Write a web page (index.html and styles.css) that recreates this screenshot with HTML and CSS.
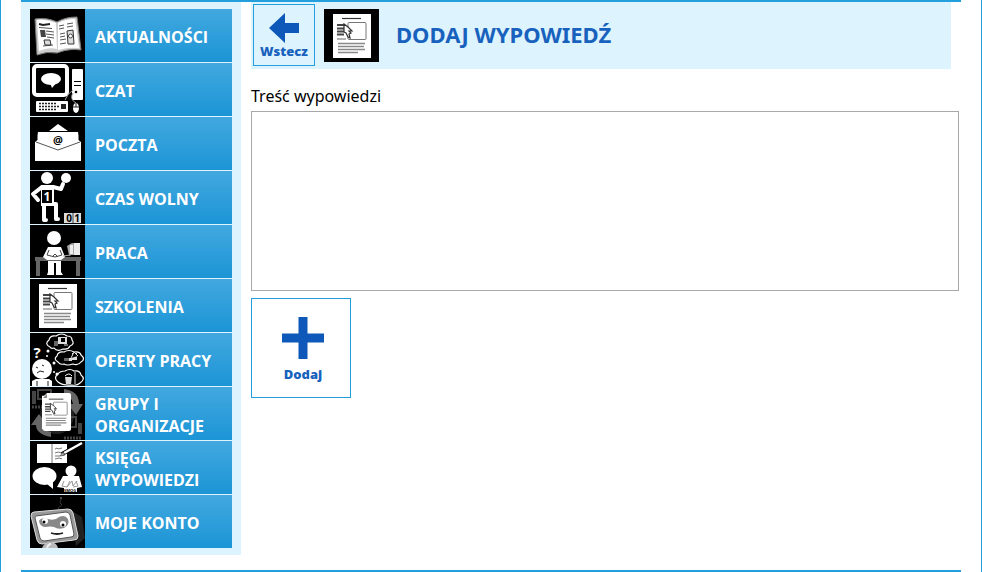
FILE: index.html
```
<!DOCTYPE html>
<html lang="pl">
<head>
<meta charset="utf-8">
<title>Dodaj wypowiedź</title>
<link rel="stylesheet" href="styles.css">
</head>
<body>
<svg class="defs" aria-hidden="true">
  <defs>
    <symbol id="sheet" viewBox="0 0 38 44">
      <path fill="#fff" d="M0 0h38v44H0z"/>
      <path stroke="#333" stroke-width="1.200" d="M9 4.500h19"/>
      <path stroke="#444" stroke-width="1.800" d="M4 11h8M4 14.500h7M4 17.500h8M4 20.500h7"/>
      <path stroke="#999" stroke-width="1.500" d="M4 25h9"/>
      <rect x="15" y="8.500" width="18" height="17" rx="1" fill="#fff" stroke="#777"/>
      <path fill="#fff" stroke="#333" stroke-width="1.200" d="M11 10v8l2 1 2 4 2 1-1-4 2-1-2-2h3l-4-4z"/>
      <path stroke="#888" stroke-width="1.500" d="M5 29.500h27M5 32.500h26M5 35.500h27M5 38.500h20"/>
    </symbol>
  </defs>
</svg>
<div class="page">
  <div class="columns">
    <nav class="sidebar" aria-label="Menu">
      <ul class="menu">
        <li><a class="menu-link" href="#">
          <svg class="icon" viewBox="0 0 55 53" aria-hidden="true">
            <path fill="#ccc" stroke="#777" d="M5 10q12-2 22 3Q35 8 47 8l4 33q-12-2-24 3-10-2-20 2z"/>
            <path fill="#fff" d="M7 11q10-1 19 3l1 26q-9-2-18 2zM28 14q8-4 17-4l4 29q-11-1-21 2z"/>
            <path stroke="#222" stroke-width="2" fill="none" d="M9 15l4 1 7-1"/>
            <path stroke="#555" fill="none" d="M9 18.500l13 1M16 22l8 1M16 25l8 1M17 28l7 1M13 37l10-1M29 17l5-1M37 15l6-1M29 20l5-1M37 18l6-1M30 25l5-1M30 28l5-1M30 31l6-1M30 35l6-1"/>
            <path fill="#444" d="M10 21h5l1 7h-5z"/>
            <path fill="#ddd" stroke="#333" d="M14 31h6l1 5h-6zM37 22l6-1 1 14h-6z"/>
            <circle cx="40.500" cy="27" r="2" fill="#fff" stroke="#444"/>
          </svg>
          <span class="menu-text">AKTUALNOŚCI</span></a></li>
        <li><a class="menu-link" href="#">
          <svg class="icon" viewBox="0 0 55 53" aria-hidden="true">
            <rect x="4" y="3" width="33" height="29" rx="3" fill="#000" stroke="#fff" stroke-width="4"/>
            <ellipse cx="21" cy="16" rx="10" ry="6" fill="#fff"/><path fill="#fff" d="M20 20l7-1-5 6z"/>
            <rect x="42" y="6" width="11" height="31" rx="1" fill="#fff"/>
            <path stroke="#000" d="M44 18.500h7M44 22.500h7"/><circle cx="46" cy="29" r="1.300"/>
            <path d="M43 27q-5 3-8 10M43 30q-4 6 3 10" stroke="#999" fill="none"/>
            <rect x="6" y="38" width="32" height="11" rx="1" fill="#fff"/>
            <path stroke="#222" stroke-width="1.500" stroke-dasharray="2 1" d="M9 40.500h18M9 43.500h20M9 46.500h18"/><path fill="#222" d="M31 41h5v5h-5z"/>
            <ellipse cx="46" cy="45" rx="3" ry="5" fill="#fff"/><path stroke="#222" fill="none" d="M43 44h6M46 40v4"/>
          </svg>
          <span class="menu-text">CZAT</span></a></li>
        <li><a class="menu-link" href="#">
          <svg class="icon" viewBox="0 0 55 53" aria-hidden="true">
            <path fill="#fff" d="M19 14l9-7 10 7z"/>
            <path fill="#fff" d="M5 25l3-10h40l3 10v19H5z"/>
            <path d="M5 15h2.500v8L5 25zM48.500 15H51v10l-2.500-2z"/>
            <path fill="none" stroke="#555" d="M6 25l22 8 22-8"/>
            <text x="28" y="27" class="glyph glyph-at">@</text>
          </svg>
          <span class="menu-text">POCZTA</span></a></li>
        <li><a class="menu-link" href="#">
          <svg class="icon" viewBox="0 0 55 53" aria-hidden="true">
            <circle cx="17" cy="7" r="6" fill="#fff"/><circle cx="36" cy="7" r="5" fill="#fff"/>
            <path fill="none" stroke="#fff" stroke-width="4" stroke-linejoin="round" stroke-linecap="round" d="M12 16h11l8 2 2-5M12 16l-9 7 5 6M14 31v18M14 33h12v15h2M14 49h2"/>
            <path fill="#fff" d="M11 14h13v21H11z"/>
            <path d="M12 19h10v13H12z"/>
            <text x="17" y="30" class="glyph glyph-number">1</text>
            <rect x="34" y="42" width="17" height="10" fill="#ddd"/><path stroke="#444" d="M43 42v10"/>
            <text x="39" y="51" class="glyph glyph-score">0</text><text x="47" y="51" class="glyph glyph-score">1</text>
          </svg>
          <span class="menu-text">CZAS WOLNY</span></a></li>
        <li><a class="menu-link" href="#">
          <svg class="icon" viewBox="0 0 55 53" aria-hidden="true">
            <path fill="#666" d="M5 32h46v4h-1v15h-4V36H10v15H6V36H5z"/>
            <circle cx="24" cy="13" r="7" fill="#fff"/>
            <path fill="#fff" d="M18 22h13l4 10-4 3H17l-4-3zM18 36h13v11l2 3h-7V38h-2v12h-7l1-3z"/>
            <path stroke="#444" fill="none" d="M19 25l-2 5 8 2 7-2-2-5M22 32l3-3 3 3"/>
            <path fill="#aaa" d="M42 18l-5 3 2 9h7l3-2V19z"/><path fill="#eee" d="M40 20h3v9h-3zM44 18h6v12h-6z"/>
            <path stroke="#aaa" d="M33 31l8-1"/>
          </svg>
          <span class="menu-text">PRACA</span></a></li>
        <li><a class="menu-link" href="#">
          <svg class="icon" viewBox="0 0 55 53" aria-hidden="true"><use href="#sheet" x="9" y="5" width="38" height="44"/></svg>
          <span class="menu-text">SZKOLENIA</span></a></li>
        <li><a class="menu-link" href="#">
          <svg class="icon" viewBox="0 0 55 53" aria-hidden="true">
            <g fill="#000" stroke="#fff" stroke-width="1.200">
              <path d="M20 14q-6-3-1-7 1-5 7-4 6-4 11 0 5 0 5 4 3 4-2 6-2 4-7 3-6 3-9-1-3 1-4-1z"/>
              <path d="M28 29q-5-3-1-6 1-5 7-4 5-3 10 0 6-1 7 3 5 4 0 7-3 4-8 2-6 2-9 0-4 1-6-2z"/>
              <path d="M28 49q-5-4 0-8 2-3 7-3 5-3 9 0 6-1 7 4 5 4-1 8-3 3-8 2-9 1-14-3z"/>
            </g>
            <path fill="#666" d="M24 8h4v5h-4zM34 25h5v3h-5z"/><path fill="#ddd" d="M28 4h9v7h-9zM42 20h5v7h-5zM35 44h7l-1 7h-5zM39 25h3v3h-3z"/>
            <path fill="#000" d="M31 5h4v4h-4z"/><path stroke="#ddd" d="M45 39v12M41 25l3-6 4 4M34 12h4"/>
            <path fill="none" stroke="#fff" d="M35 43q4-4 7 0"/>
            <circle cx="18" cy="18" r="1.500" fill="#fff"/><circle cx="17" cy="23" r="1" fill="#fff"/><circle cx="24" cy="30" r="1.500" fill="#fff"/><circle cx="24" cy="39" r="1" fill="#fff"/><circle cx="27" cy="41" r="1.500" fill="#fff"/>
            <circle cx="12" cy="36" r="10" fill="#fff"/><path fill="#fff" d="M2 53v-5l4-2h13l3 2v5z"/>
            <path stroke="#222" fill="none" d="M6 34l2 1M12 32l2 1M7 40l3-2 4 1M7 48v5M18 48v5"/>
            <text x="7" y="25" class="glyph glyph-question">?</text>
          </svg>
          <span class="menu-text">OFERTY PRACY</span></a></li>
        <li><a class="menu-link" href="#">
          <svg class="icon" viewBox="0 0 55 53" aria-hidden="true">
            <ellipse cx="27" cy="27" rx="17" ry="20" fill="#222"/>
            <path fill="none" stroke="#444" stroke-width="2" d="M8 3h13v9H8zM34 30h12v10H34z"/>
            <path fill="#444" d="M2 4h4v13H2zM48 36h4v11h-4z"/>
            <path stroke="#444" stroke-dasharray="2 1" stroke-width="3" d="M2 20h10M34 51h18"/>
            <path fill="#666" d="M34 2q15 2 15 15h4l-7 11-8-11h5q-1-8-9-9zM21 50Q6 47 6 38H1l8-11 8 11h-5q1 5 9 7z"/>
            <use href="#sheet" x="13" y="6" width="28" height="39"/>
            <path fill="#fff" d="M13 10l4-4h22q2 0 2 2v34q0 2-2 2H15q-2 0-2-2z"/>
            <use href="#sheet" x="12" y="8" width="29" height="35"/>
            <path fill="#888" d="M13 11l4-4v4z"/>
          </svg>
          <span class="menu-text">GRUPY I ORGANIZACJE</span></a></li>
        <li><a class="menu-link" href="#">
          <svg class="icon" viewBox="0 0 55 53" aria-hidden="true">
            <path fill="#fff" d="M7 3h30v19H7z"/><path stroke="#777" d="M22 3v19"/>
            <path stroke="#777" fill="none" d="M25 8l2-1 1 1 4-1M25 12l3-1 4 1M25 15h5M25 18l4-1 3 1"/>
            <path stroke="#000" stroke-width="4" d="M32 13L52 2"/><path stroke="#fff" stroke-width="2.500" d="M34 12L52 2"/><path fill="#aaa" stroke="#222" stroke-width=".5" d="M30 15l3-4 2 3z"/>
            <ellipse cx="14.500" cy="35" rx="12" ry="9" fill="#fff"/><path fill="#fff" d="M17 43l6-3v8z"/>
            <circle cx="41" cy="30" r="5.500" fill="#fff"/><path fill="#fff" d="M33 35h16l3 11-5 1v4H34v-4l-7-1z"/>
            <path stroke="#999" fill="none" d="M34 40l-2 5 5 1 3-6M37 46l5-6 1 5 4-5M43 46l5-1-2-5"/>
            <text x="40" y="51" class="glyph glyph-smog">SMOG</text>
          </svg>
          <span class="menu-text">KSIĘGA WYPOWIEDZI</span></a></li>
        <li><a class="menu-link" href="#">
          <svg class="icon" viewBox="0 0 55 53" aria-hidden="true">
            <path fill="none" stroke="#333" d="M31 4l-1 4 2 2-4 3 2 3"/><circle cx="31" cy="3" r="1" fill="#666"/>
            <path fill="#222" d="M40 15l12 7 3 21-9 8z"/>
            <path fill="#999" stroke="#ddd" d="M4 17l34-3q4 0 5 4l5 23q0 4-4 4L12 49q-4 0-5-4L1 21q0-4 3-4z"/>
            <path fill="#fff" stroke="#555" d="M6 21l30-4q3 0 4 3l4 19q0 3-3 3l-27 4q-3 0-4-3L5 23q0-2 1-2z"/>
            <path fill="#888" d="M9 26q2-4 9-2 7 2 11-2 6-3 9 2 2 6-4 9-6 2-10-1-4-1-8 0-6 0-7-6z"/>
            <circle cx="15" cy="26" r="3" fill="#fff"/><circle cx="33" cy="29" r="3" fill="#fff"/>
            <circle cx="14" cy="27" r="1.500"/><circle cx="33" cy="30" r="1.500"/>
            <path stroke="#222" stroke-width="1.800" fill="none" d="M21 38q6 2 12 0"/>
            <path fill="#bbb" d="M12 53q2-6 9-6 6 1 7 6z"/><path stroke="#eee" stroke-width="2" fill="none" d="M17 53q1-4 4-4"/>
          </svg>
          <span class="menu-text">MOJE KONTO</span></a></li>
      </ul>
    </nav>
    <main class="content">
      <header class="heading">
        <a class="back" href="#">
          <svg class="back-arrow" viewBox="0 0 30 30" aria-hidden="true"><path fill="#0d58b8" d="M0 15L16 0v10h14v10H16v10z"/></svg>
          Wstecz
        </a>
        <svg class="icon" viewBox="0 0 55 53" aria-hidden="true"><use href="#sheet" x="9" y="5" width="38" height="44"/></svg>
        <h1 class="title">DODAJ WYPOWIEDŹ</h1>
      </header>
      <form class="entry">
        <label for="body">Treść wypowiedzi</label>
        <textarea id="body" class="entry-text"></textarea>
        <button class="add" type="button">
          <svg class="plus" viewBox="0 0 42 42" aria-hidden="true"><path fill="#0d58b8" d="M16.500 0h9v16.500H42v9H25.500V42h-9V25.500H0v-9h16.500z"/></svg>
          Dodaj
        </button>
      </form>
    </main>
  </div>
</div>
</body>
</html>
```
FILE: styles.css
```
* {
  box-sizing: border-box;
}

body {
  margin: 0;
  background: #fff;
  color: #000;
  font-family: "Noto Sans", "Open Sans", sans-serif;
  font-size: 16px;
  line-height: 22px;
}

.defs {
  display: none;
}

.page {
  min-height: 100vh;
  padding: 0 20px;
  border: solid #239fdd;
  border-width: 0 1px;
}

.columns {
  display: flex;
  align-items: flex-start;
  gap: 10px;
  border: solid #239fdd;
  border-width: 2px 0;
  padding-bottom: 15px;
}

.sidebar {
  flex: 0 0 220px;
  padding: 7px 9px;
  background: #ddf4ff;
}

.menu {
  display: grid;
  gap: 1px;
  margin: 0;
  padding: 0;
  list-style: none;
}

.menu-link {
  display: flex;
  align-items: center;
  gap: 10px;
  height: 53px;
  background: linear-gradient(#42a8df, #1c95d6);
  color: #fff;
  font-family: "Open Sans", sans-serif;
  font-weight: 700;
  text-decoration: none;
}

.menu-text {
  padding-top: 2px;
}

.icon {
  flex: none;
  width: 55px;
  height: 53px;
  background: #000;
}

.glyph {
  font-family: "Open Sans", sans-serif;
  text-anchor: middle;
}

.glyph-at {
  font-size: 11px;
  font-weight: 700;
}

.glyph-number {
  font-size: 12px;
  fill: #fff;
}

.glyph-score {
  font-size: 10px;
}

.glyph-question {
  font-size: 15px;
  font-weight: 700;
  fill: #fff;
}

.glyph-smog {
  font-size: 4px;
  font-weight: 700;
}

.content {
  flex: 1;
  min-width: 0;
}

.heading {
  display: flex;
  align-items: center;
  margin-right: 10px;
  padding: 2px 2px 3px;
  background: #ddf4ff;
}

.heading .icon {
  margin: 0 17px 0 9px;
}

.back,
.add {
  display: flex;
  flex-direction: column;
  align-items: center;
  border: 1px solid #239fdd;
  color: #1862bd;
  font: 800 13px/16px "Open Sans", sans-serif;
  text-decoration: none;
}

.back {
  width: 62px;
  height: 62px;
  padding-top: 8px;
}

.back-arrow {
  width: 30px;
  height: 30px;
}

.title {
  margin: 0;
  padding-bottom: 2px;
  color: #1862bd;
  font-size: 22px;
  line-height: 30px;
}

.entry {
  display: flex;
  flex-direction: column;
  align-items: flex-start;
  padding-top: 16px;
}

.entry-text {
  width: calc(100% - 2px);
  height: 180px;
  margin: 4px 0 7px;
  border: 1px solid #a9a9a9;
  background: #fff;
  font: inherit;
  resize: none;
}

.add {
  justify-content: center;
  gap: 7px;
  width: 100px;
  height: 100px;
  padding: 2px 0 0 4px;
  background: #fff;
}

.plus {
  width: 42px;
  height: 42px;
}
```
